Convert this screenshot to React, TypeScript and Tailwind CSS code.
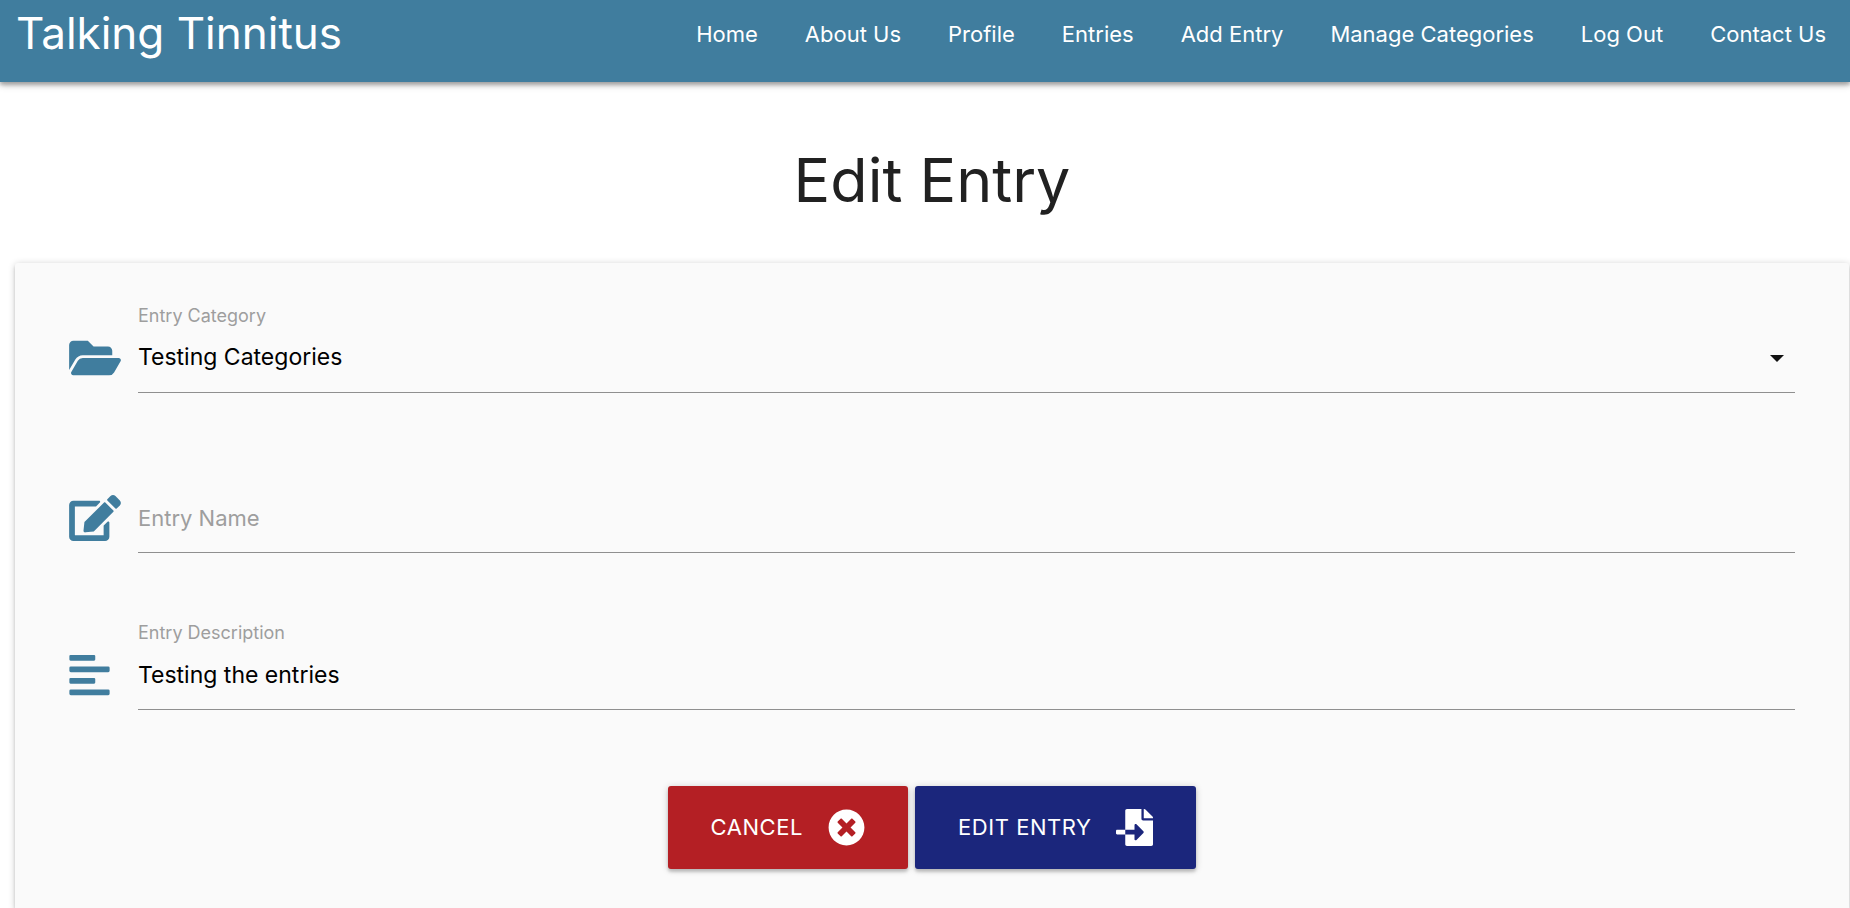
import type { ReactNode } from "react";
import {
  FaAlignLeft,
  FaEdit,
  FaFileImport,
  FaFolderOpen,
  FaTimesCircle,
} from "react-icons/fa";

const links = [
  "Home",
  "About Us",
  "Profile",
  "Entries",
  "Add Entry",
  "Manage Categories",
  "Log Out",
  "Contact Us",
];

const control =
  "block h-16 w-full appearance-none rounded-none border-b border-[#8f8f8f] bg-transparent pb-1.5 text-[23px] text-black outline-none";
const caption = "block pb-px text-[18px] leading-6 text-[#9e9e9e]";

function Row({ icon, children }: { icon: ReactNode; children: ReactNode }) {
  return (
    <div className="flex items-end">
      <div className="flex h-16 w-[69px] shrink-0 items-center pb-1.5 text-[#407d9e]">
        {icon}
      </div>
      <div className="relative min-w-0 grow">{children}</div>
    </div>
  );
}

export default function App() {
  return (
    <div className="flex min-h-screen flex-col bg-white font-['Inter',sans-serif] text-[#212121]">
      <header className="flex h-[82px] items-start justify-between bg-[#407d9e] pl-4 pr-6 text-white shadow-[0_3px_3px_0_rgba(0,0,0,0.16),0_4px_7px_0_rgba(0,0,0,0.14),0_1px_7px_0_rgba(0,0,0,0.2)]">
        <a href="#" className="text-[44px] leading-[66px] whitespace-nowrap">
          Talking Tinnitus
        </a>
        <nav>
          <ul className="flex gap-[47px]">
            {links.map((link) => (
              <li key={link}>
                <a href="#" className="text-[22px] leading-[68px] whitespace-nowrap">
                  {link}
                </a>
              </li>
            ))}
          </ul>
        </nav>
      </header>

      <main className="flex grow flex-col pl-[15px] pr-px">
        <h1 className="pt-16 pb-12 text-center text-[61px] leading-[69px]">Edit Entry</h1>
        <form
          onSubmit={(event) => event.preventDefault()}
          className="grow rounded-t-[3px] bg-[#fafafa] px-[54px] pt-[41px] shadow-[0_3px_3px_0_rgba(0,0,0,0.14),0_4px_2px_-3px_rgba(0,0,0,0.12),0_1px_7px_0_rgba(0,0,0,0.2)]"
        >
          <Row icon={<FaFolderOpen className="h-[46px] w-[52px]" />}>
            <label htmlFor="category" className={caption}>
              Entry Category
            </label>
            <select id="category" className={control}>
              <option>Testing Categories</option>
            </select>
            <svg
              viewBox="0 0 14 7"
              className="pointer-events-none absolute right-[11px] bottom-[31px] h-[7px] w-[14px]"
              aria-hidden="true"
            >
              <path d="M0 0h14L7 7z" fill="#111" />
            </svg>
          </Row>

          <div className="pt-24">
            <Row icon={<FaEdit className="h-[46px] w-[52px]" />}>
              <label
                htmlFor="name"
                className="pointer-events-none absolute inset-x-0 top-0 text-[22px] leading-[58px] text-[#9e9e9e]"
              >
                Entry Name
              </label>
              <input id="name" type="text" className={control} />
            </Row>
          </div>

          <div className="pt-[68px]">
            <Row icon={<FaAlignLeft className="h-[46px] w-[41px]" />}>
              <label htmlFor="description" className={caption}>
                Entry Description
              </label>
              <input
                id="description"
                type="text"
                defaultValue="Testing the entries"
                className={control}
              />
            </Row>
          </div>

          <div className="flex justify-center gap-[7px] pt-[76px] pb-10">
            <button
              type="button"
              className="flex h-[83px] items-center gap-[25px] rounded-[3px] bg-[#b41f24] px-[43px] text-[22px] tracking-wide text-white uppercase shadow-[0_3px_3px_0_rgba(0,0,0,0.16),0_1px_7px_0_rgba(0,0,0,0.2)]"
            >
              Cancel
              <FaTimesCircle className="text-[37px]" />
            </button>
            <button
              type="submit"
              className="flex h-[83px] items-center gap-[25px] rounded-[3px] bg-[#1b267c] px-[43px] text-[22px] tracking-wide text-white uppercase shadow-[0_3px_3px_0_rgba(0,0,0,0.16),0_1px_7px_0_rgba(0,0,0,0.2)]"
            >
              Edit Entry
              <FaFileImport className="text-[37px]" />
            </button>
          </div>
        </form>
      </main>
    </div>
  );
}
